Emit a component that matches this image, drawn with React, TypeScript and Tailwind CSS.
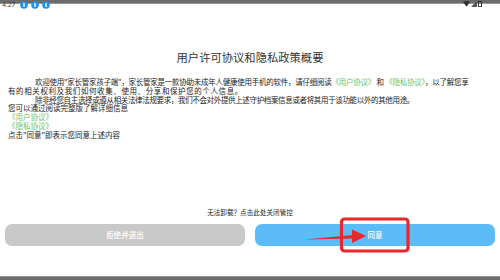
import React from "react";

const font = { fontFamily: '"Noto Sans CJK SC", "Noto Sans", sans-serif' };

function BlueDot() {
  return (
    <svg width="8" height="8" viewBox="0 0 8 8">
      <circle cx="4" cy="4" r="3.8" fill="#1e90f0" />
      <rect x="3.3" y="2" width="1.4" height="4" rx="0.5" fill="#ffffff" />
    </svg>
  );
}

export default function App() {
  return (
    <div className="relative w-[500px] h-[280px] bg-white flex flex-col overflow-hidden" style={font}>
      {/* status bar */}
      <div className="h-[4px] bg-[#6c6c6c] border-b border-[#9a9a9a] shrink-0" />
      <div className="absolute left-[2px] top-[1px] flex items-center gap-[3px]">
        <span className="text-[7px] leading-[8px] text-[#444] mr-[1px]" style={{ fontFamily: "Roboto, sans-serif" }}>4:27</span>
        <BlueDot />
        <BlueDot />
        <BlueDot />
      </div>
      <div className="absolute right-[18px] top-[1px] flex items-center gap-[1px]">
        <svg width="7" height="6" viewBox="0 0 10 8">
          <path d="M0 1 Q5 -2 10 1 L5 8 Z" fill="#333" />
        </svg>
        <svg width="6" height="6" viewBox="0 0 6 6">
          <path d="M0 6 L6 0 L6 6 Z" fill="#555" />
        </svg>
        <svg width="4" height="6" viewBox="0 0 4 6">
          <rect x="0.5" y="0.5" width="3" height="5.2" fill="none" stroke="#333" strokeWidth="1" />
        </svg>
      </div>

      {/* title */}
      <div className="mt-[46px] text-center text-[11.3px] leading-[14px] text-[#333]">
        用户许可协议和隐私政策概要
      </div>

      {/* body */}
      <div className="mt-[14px] px-[8px] text-[7.5px] leading-[8.8px] text-[#222] whitespace-nowrap">
        <div className="pl-[27px] tracking-[-0.25px]">
          欢迎使用"家长管家孩子端"，家长管家是一款协助未成年人健康使用手机的软件，请仔细阅读
          <span className="text-[#6cc46c]">《用户协议》</span> 和 <span className="text-[#6cc46c]">《隐私协议》</span>，以了解您享
        </div>
        <div className="tracking-[0.6px]">有的相关权利及我们如何收集、使用、分享和保护您的个人信息。</div>
        <div className="pl-[27px] tracking-[-0.35px]">
          除非经您自主选择或遵从相关法律法规要求，我们不会对外提供上述守护档案信息或者将其用于该功能以外的其他用途。
        </div>
        <div>您可以通过阅读完整版了解详细信息</div>
        <div className="text-[#6cc46c]">《用户协议》</div>
        <div className="text-[#6cc46c]">《隐私协议》</div>
        <div>点击"同意"即表示您同意上述内容</div>
      </div>

      {/* bottom */}
      <div className="mt-[67px] text-center text-[6.6px] leading-[10px] text-[#222]">
        无法卸载？点击此处关闭管控
      </div>
      <div className="mt-[7px] px-[5px] flex gap-[10px]">
        <div className="flex-1 h-[22px] rounded-[7px] bg-[#c9c9c9] flex items-center justify-center text-white text-[7.5px] font-medium">
          拒绝并退出
        </div>
        <div className="flex-1 h-[22px] rounded-[7px] bg-[#5cbcf8] flex items-center justify-center text-white text-[7.5px] font-medium">
          同意
        </div>
      </div>
      <div className="flex-1" />
      <div className="h-[4px] bg-[#6c6c6c] border-t border-[#9a9a9a] shrink-0" />

      {/* annotation overlay */}
      <svg className="absolute inset-0 pointer-events-none" width="500" height="280" viewBox="0 0 500 280">
        <rect x="341.5" y="219" width="66.5" height="32" rx="3" fill="none" stroke="#e8282b" strokeWidth="3.2" />
        <polygon points="304,239.5 354,235 354,238.5" fill="#e8282b" />
        <polygon points="352,229.5 366,236 352,243" fill="#e8282b" />
      </svg>
    </div>
  );
}
